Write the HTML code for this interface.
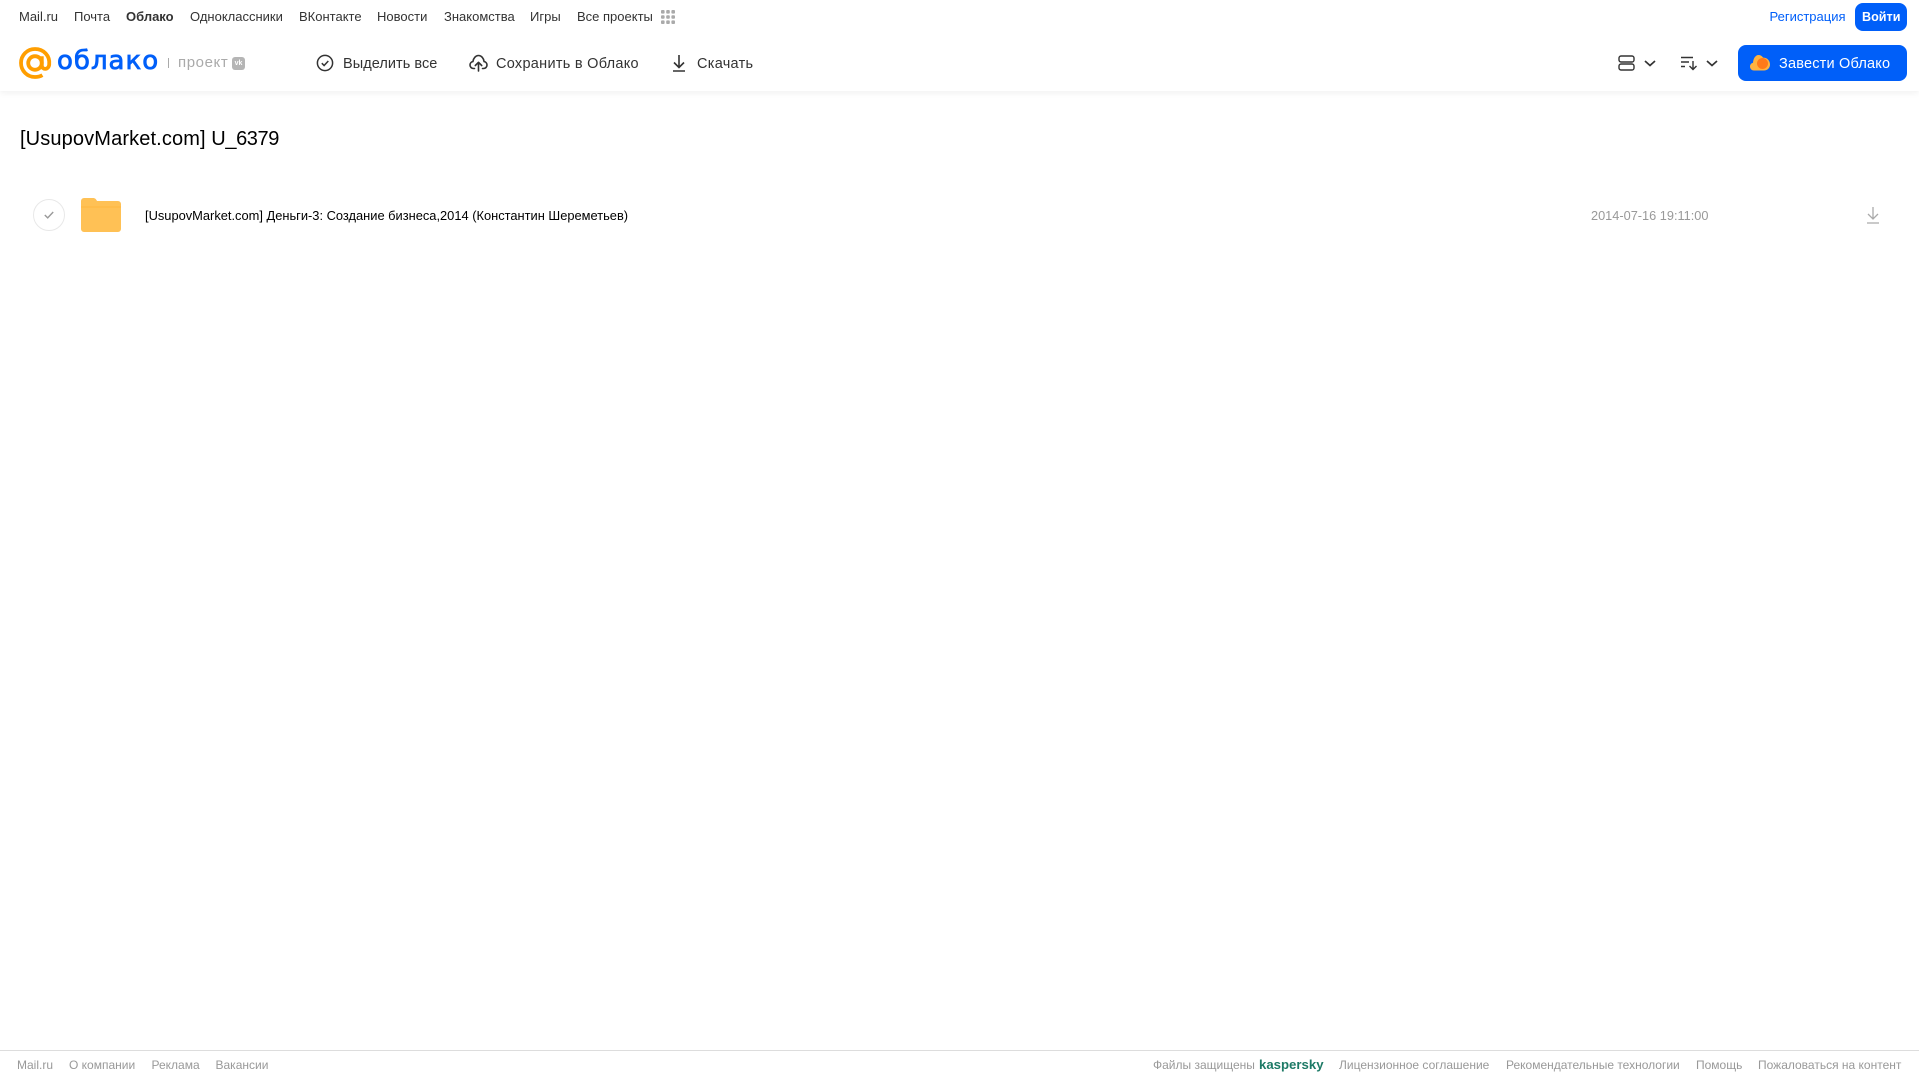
<!DOCTYPE html>
<html lang="ru"><head><meta charset="utf-8"><title>Облако</title>
<style>
html,body{margin:0;padding:0;background:#fff;width:1919px;height:1079px;overflow:hidden}
body{position:relative;font-family:"Liberation Sans",Arial,sans-serif}
.t{position:absolute;white-space:nowrap;line-height:20px;height:20px}
.n{top:7px;font-size:13px;color:#333}
.a{top:54px;font-size:14.5px;color:#333;letter-spacing:.28px}
.f{top:1055px;font-size:12px;color:#999}
svg{position:absolute;overflow:visible}
#hdr{position:absolute;left:0;top:0;width:1919px;height:91px;background:#fff;box-shadow:0 2px 6px rgba(0,0,0,.06)}
.btn{position:absolute;background:#005ff9}
</style></head><body>
<div id="hdr"></div>
<span class="t n" style="left:19px">Mail.ru</span>
<span class="t n" style="left:74px">Почта</span>
<span class="t n" style="left:126px;font-weight:700">Облако</span>
<span class="t n" style="left:190px">Одноклассники</span>
<span class="t n" style="left:299px">ВКонтакте</span>
<span class="t n" style="left:377px">Новости</span>
<span class="t n" style="left:444px">Знакомства</span>
<span class="t n" style="left:530px">Игры</span>
<span class="t n" style="left:577px">Все проекты</span>
<svg style="left:661px;top:10px" width="14" height="14" fill="#aaa"><rect x="0" y="0" width="3.6" height="3.6" rx="1"/><rect x="5.2" y="0" width="3.6" height="3.6" rx="1"/><rect x="10.4" y="0" width="3.6" height="3.6" rx="1"/><rect x="0" y="5.2" width="3.6" height="3.6" rx="1"/><rect x="5.2" y="5.2" width="3.6" height="3.6" rx="1"/><rect x="10.4" y="5.2" width="3.6" height="3.6" rx="1"/><rect x="0" y="10.4" width="3.6" height="3.6" rx="1"/><rect x="5.2" y="10.4" width="3.6" height="3.6" rx="1"/><rect x="10.4" y="10.4" width="3.6" height="3.6" rx="1"/></svg>

<svg style="left:19px;top:47px" width="33" height="33" viewBox="0 0 33 33" fill="none" stroke="#ff9e00" stroke-width="3.8"><circle cx="16" cy="16" r="6.8"/><path d="M22.800 9.200v9c0 5 6.800 5 7.400-.6C31.200 8.500 24.500 2 16 2 8.200 2 2 8.200 2 16s6.200 14 14 14c3 0 5.200-.6 7.400-1.900"/></svg>
<span class="t" style="left:57px;top:43px;height:36px;line-height:36px;font-family:'DejaVu Sans','Liberation Sans',sans-serif;font-size:26px;color:#005ff9;-webkit-text-stroke:.8px #005ff9;letter-spacing:1px">облако</span>
<div style="position:absolute;left:168px;top:58px;width:1px;height:10px;background:#aaa"></div>
<span class="t" style="left:178px;top:53px;font-size:15px;color:#aaa;letter-spacing:.6px">проект</span>
<div style="position:absolute;left:232px;top:57px;width:13px;height:13px;border-radius:3px;background:#b5b5b5;color:#fff;font-size:7px;font-weight:700;line-height:13px;text-align:center">vk</div>

<svg style="left:316px;top:54px" width="18" height="18" viewBox="0 0 18 18" fill="none" stroke="#333" stroke-width="1.500"><circle cx="9" cy="9" r="7.600"/><path d="M5.800 9.200l2.300 2.300 4.200-4.500"/></svg>
<span class="t a" style="left:343px;letter-spacing:.05px">Выделить все</span>
<svg style="left:469px;top:54px" width="19" height="18" viewBox="0 0 19 18" fill="none" stroke="#333" stroke-width="1.600" stroke-linecap="round" stroke-linejoin="round"><path d="M5.500 14.500H4.500C2.500 14.500 1 13 1 11c0-1.700 1.200-3.100 2.900-3.400C4.300 4.300 6.700 1.500 9.500 1.500c2.900 0 5.200 2.800 5.600 6.100 1.700.3 2.900 1.700 2.900 3.400 0 2-1.500 3.500-3.500 3.500h-1"/><path d="M9.500 17V8.500M6.300 11.500l3.200-3.200 3.200 3.200"/></svg>
<span class="t a" style="left:496px">Сохранить в Облако</span>
<svg style="left:671px;top:54px" width="16" height="18" viewBox="0 0 16 18" fill="none" stroke="#333" stroke-width="1.600"><path d="M8 1v12M3 8.500l5 5 5-5M2 17h12"/></svg>
<span class="t a" style="left:697px">Скачать</span>

<svg style="left:1618px;top:55px" width="17" height="16" viewBox="0 0 17 16" fill="none" stroke="#333" stroke-width="1.400"><rect x="1" y="1" width="15" height="6" rx="2"/><rect x="1" y="9" width="15" height="6" rx="2"/></svg>
<svg style="left:1644px;top:60px" width="12" height="7" viewBox="0 0 12 7" fill="none" stroke="#333" stroke-width="1.700"><path d="M1 1l5 4.500L11 1"/></svg>
<svg style="left:1681px;top:56px" width="17" height="15" viewBox="0 0 17 15" fill="none" stroke="#333" stroke-width="1.400"><path d="M0 1.500h12M0 6h8M0 10.500h4M12 5v8.500M8.500 10l3.500 3.500 3.500-3.500"/></svg>
<svg style="left:1706px;top:60px" width="12" height="7" viewBox="0 0 12 7" fill="none" stroke="#333" stroke-width="1.700"><path d="M1 1l5 4.500L11 1"/></svg>

<span class="t n" style="left:1769.500px;color:#005ff9">Регистрация</span>
<div class="btn" style="left:1855px;top:3px;width:52px;height:28px;border-radius:8px"></div>
<span class="t" style="left:1862px;top:7px;font-size:12.600px;font-weight:700;color:#fff">Войти</span>
<div class="btn" style="left:1738px;top:45px;width:169px;height:36px;border-radius:8px"></div>
<svg style="left:1750px;top:54px" width="20" height="17" viewBox="0 0 20 17"><path d="M4 16.500C1.800 16.500 0 14.800 0 12.500c0-1.900 1.200-3.400 3-3.800C3.300 4.500 5.500 1 8.500 1c2 0 3.600 1 4.500 2.600C16.500 3.400 20 6 20 10.500c0 3.400-2.500 6-6 6z" fill="#ffb340"/><circle cx="12.500" cy="9.500" r="5.500" fill="#ff7a1a"/></svg>
<span class="t a" style="left:1779px;color:#fff;letter-spacing:.2px">Завести Облако</span>

<span class="t" style="left:20px;top:127px;height:24px;line-height:24px;font-size:20px;color:#000"><span style="letter-spacing:.13px">[UsupovMarket.com]</span> <span style="letter-spacing:-.4px">U_6379</span></span>

<div style="position:absolute;left:33px;top:199px;width:30px;height:30px;border:1px solid #e8e8e8;border-radius:50%"></div>
<svg style="left:44px;top:211px" width="10" height="8" viewBox="0 0 10 8" fill="none" stroke="#999" stroke-width="1.400"><path d="M.8 4l2.900 2.900L9.200 1"/></svg>
<svg style="left:81px;top:198px" width="40" height="34" viewBox="0 0 40 34"><path d="M0 3a3 3 0 0 1 3-3h9c2 0 3 1 4 3h21a3 3 0 0 1 3 3v25a3 3 0 0 1-3 3H3a3 3 0 0 1-3-3z" fill="#ffc155"/><path d="M0 9h40" stroke="#ffb63f" stroke-width="1"/></svg>
<span class="t" style="left:145px;top:206px;font-size:12.870px;color:#000">[UsupovMarket.com] Деньги-3: Создание бизнеса,2014 (Константин Шереметьев)</span>
<span class="t" style="left:1591px;top:206px;font-size:12.750px;color:#999">2014-07-16 19:11:00</span>
<svg style="left:1866px;top:207px" width="14" height="17" viewBox="0 0 14 17" fill="none" stroke="#aaa" stroke-width="1.300"><path d="M7 0v12M2 7l5 5 5-5M1 16h12"/></svg>

<div style="position:absolute;left:0;top:1050px;width:1919px;height:1px;background:#ddd"></div>
<span class="t f" style="left:17px">Mail.ru</span>
<span class="t f" style="left:69px">О компании</span>
<span class="t f" style="left:151.500px">Реклама</span>
<span class="t f" style="left:215.500px">Вакансии</span>
<span class="t f" style="left:1153px">Файлы защищены</span>
<span class="t f" style="left:1259px;font-size:13.200px;font-weight:700;color:#1d7a66">kaspersky</span>
<span class="t f" style="left:1339px">Лицензионное соглашение</span>
<span class="t f" style="left:1506px">Рекомендательные технологии</span>
<span class="t f" style="left:1696px">Помощь</span>
<span class="t f" style="left:1758px">Пожаловаться на контент</span>
</body></html>
